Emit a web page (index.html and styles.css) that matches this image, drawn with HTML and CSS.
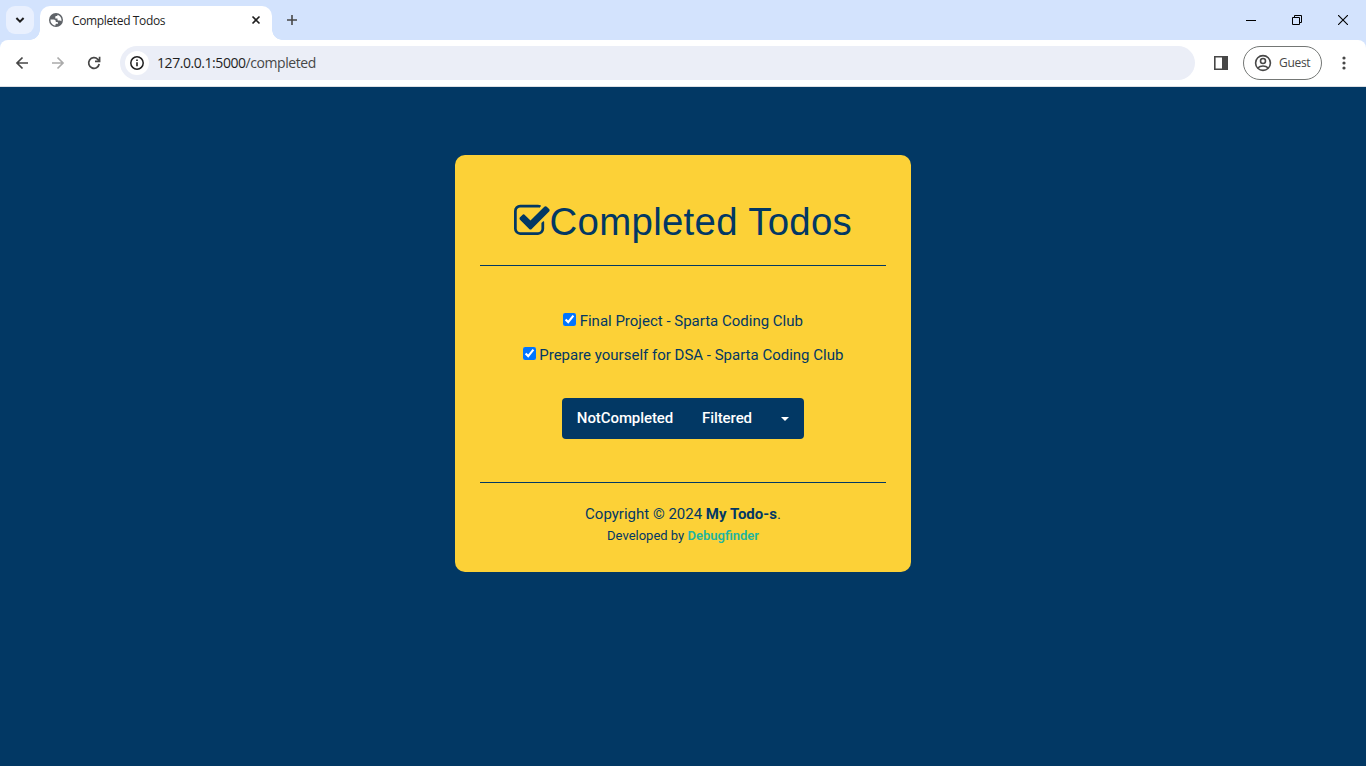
FILE: index.html
```html
<!DOCTYPE html>
<html lang="en">
<head>
<meta charset="utf-8">
<title>Completed Todos</title>
<link rel="stylesheet" href="styles.css">
</head>
<body>
<header class="browser">
  <div class="tabstrip">
    <button class="tab-search" aria-label="Search tabs"><svg width="10" height="8" viewBox="0 0 10 8"><path d="M1.400 2 5 5.600 8.600 2" fill="none" stroke="#1f1f1f" stroke-width="2"/></svg></button>
    <div class="tab">
      <svg class="globe" width="14" height="14" viewBox="0 0 14 14"><circle cx="7" cy="7" r="7" fill="#5f6368"/><path fill="#fff" d="M8.400 1.700C10.800 2.300 12.500 4.500 12.500 7c0 .5-.1.900-.2 1.300-.3-.6-.8-.9-1.500-.9H9.500c-.7 0-1-.4-1-1V5.400H6.300V4.100c0-.6.400-1 1-1h.5c.4 0 .6-.3.600-.7zM1.500 6.500h3.300c1.200 0 2 .8 2 1.900v.7h1.400c.5 0 .8.300.8.800v.8H7.300c-.5 0-.8.300-.8.700v1.100C3.700 12.300 1.500 10 1.500 7.200z"/></svg>
      <span class="tab-title">Completed Todos</span>
      <svg class="tab-close" width="10" height="10" viewBox="0 0 10 10"><path d="m1.500 1.500 7 7m0-7-7 7" stroke="#1f1f1f" stroke-width="1.600"/></svg>
    </div>
    <svg class="new-tab" width="12" height="12" viewBox="0 0 12 12"><path d="M6 1v10M1 6h10" stroke="#474747" stroke-width="1.600"/></svg>
    <div class="window-controls">
      <svg width="10" height="10" viewBox="0 0 10 10"><path d="M0 5.500h10" stroke="#000"/></svg>
      <svg width="10" height="10" viewBox="0 0 10 10"><path d="M.5 2.500h7v7h-7zM2.500 2.500v-2h7v7h-2" fill="none" stroke="#000"/></svg>
      <svg width="10" height="10" viewBox="0 0 10 10"><path d="m0 0 10 10M10 0 0 10" stroke="#000" stroke-width="1.100"/></svg>
    </div>
  </div>
  <div class="toolbar">
    <svg class="nav" width="20" height="20" viewBox="0 0 20 20"><path d="M16 10H5m5.500-5.500L5 10l5.500 5.500" fill="none" stroke="#474747" stroke-width="1.700"/></svg>
    <svg class="nav" width="20" height="20" viewBox="0 0 20 20"><path d="M4 10h11M9.500 4.500 15 10l-5.500 5.500" fill="none" stroke="#ababab" stroke-width="1.700"/></svg>
    <svg class="nav" width="20" height="20" viewBox="0 0 20 20"><path d="M15.200 11a5.300 5.300 0 1 1-1.400-4.700L15.300 8M15.600 3.800v4.600H11" fill="none" stroke="#474747" stroke-width="1.700"/></svg>
    <div class="address">
      <span class="site-info"><svg width="16" height="16" viewBox="0 0 16 16"><circle cx="8" cy="8" r="6.200" fill="none" stroke="#1f1f1f" stroke-width="1.500"/><path d="M8 7.200v4M8 4.500v1.600" stroke="#1f1f1f" stroke-width="1.600"/></svg></span>
      <span class="url">127.0.0.1:5000<span class="path">/completed</span></span>
    </div>
    <svg class="panel" width="16" height="16" viewBox="0 0 16 16"><path d="M1.800 1.800h12.400v12.400H1.800z" fill="none" stroke="#474747" stroke-width="1.600"/><path d="M9 1.500h5.500v13H9z" fill="#474747"/></svg>
    <button class="guest">
      <svg width="18" height="18" viewBox="0 0 18 18"><g fill="none" stroke="#474747" stroke-width="1.600"><circle cx="9" cy="9" r="7.400"/><circle cx="9" cy="7" r="2.500"/><path d="M3.700 14c2.800-2.700 7.800-2.700 10.600 0"/></g></svg>
      <span class="guest-label">Guest</span>
    </button>
    <svg class="menu" width="4" height="16" viewBox="0 0 4 16"><g fill="#474747"><circle cx="2" cy="3" r="1.600"/><circle cx="2" cy="8" r="1.600"/><circle cx="2" cy="13" r="1.600"/></g></svg>
  </div>
</header>
<main class="page">
  <section class="card">
    <h1 class="title"><svg class="title-icon" viewBox="64 0 1664 1792"><path fill="currentColor" d="M1472 930v318q0 119-84.500 203.500t-203.500 84.500h-832q-119 0-203.500-84.500t-84.500-203.500v-832q0-119 84.500-203.500t203.500-84.500h832q63 0 117 25 15 7 18 23 3 17-9 29l-49 49q-10 10-23 10-3 0-9-2-23-6-45-6h-832q-66 0-113 47t-47 113v832q0 66 47 113t113 47h832q66 0 113-47t47-113v-254q0-13 9-22l64-64q10-10 23-10 6 0 12 3 20 8 20 29zm231-489l-814 814q-24 24-57 24t-57-24l-430-430q-24-24-24-57t24-57l110-110q24-24 57-24t57 24l263 263 647-647q24-24 57-24t57 24l110 110q24 24 24 57t-24 57z"/></svg><span>Completed Todos</span></h1>
    <ul class="todos">
      <li class="todo"><input class="check" type="checkbox" checked><span>Final Project - Sparta Coding Club</span></li>
      <li class="todo"><input class="check" type="checkbox" checked><span>Prepare yourself for DSA - Sparta Coding Club</span></li>
    </ul>
    <div class="actions">
      <button class="action">NotCompleted</button>
      <button class="action filtered">Filtered</button>
      <button class="action toggle" aria-label="More filters"><span class="caret"></span></button>
    </div>
    <footer class="footer">
      <p class="copyright">Copyright © 2024 <strong>My Todo-s</strong>.</p>
      <p class="credit">Developed by <a class="credit-link">Debugfinder</a></p>
    </footer>
  </section>
</main>
</body>
</html>
```

FILE: styles.css
```css
* { box-sizing: border-box; }
body { margin: 0; height: 766px; overflow: hidden; display: flex; flex-direction: column; background: #023864; font-family: Roboto, sans-serif; }
svg { display: block; flex: none; }
button { border: 0; padding: 0; font: inherit; }

.browser { height: 87px; background: #d3e3fd; font-family: "Open Sans", sans-serif; color: #1f1f1f; }
.tabstrip { height: 40px; display: flex; align-items: center; padding-left: 6px; }
.tab-search { width: 28px; height: 28px; border-radius: 9px; background: #e9f0fe; display: flex; align-items: center; justify-content: center; }
.tab { position: relative; width: 232px; height: 34px; margin: 6px 0 0 6px; padding: 0 11px 6px 9px; border-radius: 10px 10px 0 0; background: #fff; display: flex; align-items: center; }
.tab::before, .tab::after { content: ""; position: absolute; bottom: 0; width: 10px; height: 10px; }
.tab::before { left: -10px; background: radial-gradient(circle at 0 0, transparent 9.5px, #fff 10px); }
.tab::after { right: -10px; background: radial-gradient(circle at 100% 0, transparent 9.5px, #fff 10px); }
.tab-title { margin-left: 9px; padding-top: 1px; font-size: 12px; letter-spacing: -0.36px; }
.tab-close { margin-left: auto; }
.new-tab { margin-left: 14px; }
.window-controls { margin-left: auto; display: flex; gap: 36px; padding-right: 18px; }
.toolbar { height: 47px; border-radius: 8px 8px 0 0; border-bottom: 1px solid #dcdfe4; background: #fff; display: flex; align-items: center; padding-left: 12px; }
.nav { margin-right: 16px; }
.address { width: 1075px; height: 34px; border-radius: 17px; background: #ebeef7; display: flex; align-items: center; padding-left: 5px; }
.site-info { width: 24px; height: 24px; border-radius: 50%; background: #fff; display: flex; align-items: center; justify-content: center; }
.url { margin-left: 8px; padding-bottom: 1px; font-size: 14px; letter-spacing: -0.44px; }
.path { color: #474747; }
.panel { margin-left: 18px; }
.guest { width: 79px; height: 34px; margin-left: 14px; border: 1px solid #747775; border-radius: 17px; background: #fff; display: flex; align-items: center; gap: 7px; padding-left: 10px; font-size: 12px; color: #474747; }
.guest-label { padding-bottom: 1px; letter-spacing: -0.3px; }
.menu { margin-left: 20px; }

.page { flex: 1; padding-top: 68px; display: flex; justify-content: center; align-items: flex-start; }
.card { width: 456px; height: 417px; padding: 0 25px; border-radius: 10px; background: #fcd137; color: #023864; font-size: 15px; }
.title { height: 111px; margin: 0; padding-top: 44px; border-bottom: 1px solid #023864; display: flex; justify-content: center; align-items: flex-start; font: 400 38.4px/46px "Liberation Sans", Arial, sans-serif; letter-spacing: 0.3px; }
.title-icon { width: 35.66px; height: 38.4px; margin-top: 2.5px; }
.todos { margin: 0; padding: 45px 0 0; list-style: none; display: grid; gap: 14px; }
.todo { display: flex; justify-content: center; line-height: 20px; }
.check { width: 13px; height: 13px; margin: 2px 3.6px 0 0; }
.actions { width: 242px; height: 41px; margin: 33px auto 43px; border-radius: 4px; background: #023864; display: flex; overflow: hidden; }
.action { width: 126px; padding-bottom: 2px; background: transparent; color: #fff; font-size: 15px; font-weight: 500; letter-spacing: -0.08px; }
.filtered { width: 78px; }
.toggle { width: 38px; padding: 1px 0 0; display: flex; align-items: center; justify-content: center; }
.caret { border: 4px solid transparent; border-top-color: #fff; border-bottom: 0; }
.footer { border-top: 1px solid #023864; padding-top: 21px; text-align: center; }
.copyright, .credit { margin: 0; line-height: 20px; }
.credit { margin-top: 2px; font-size: 13px; }
.credit-link { color: #1fb5a0; font-weight: 600; }
```
